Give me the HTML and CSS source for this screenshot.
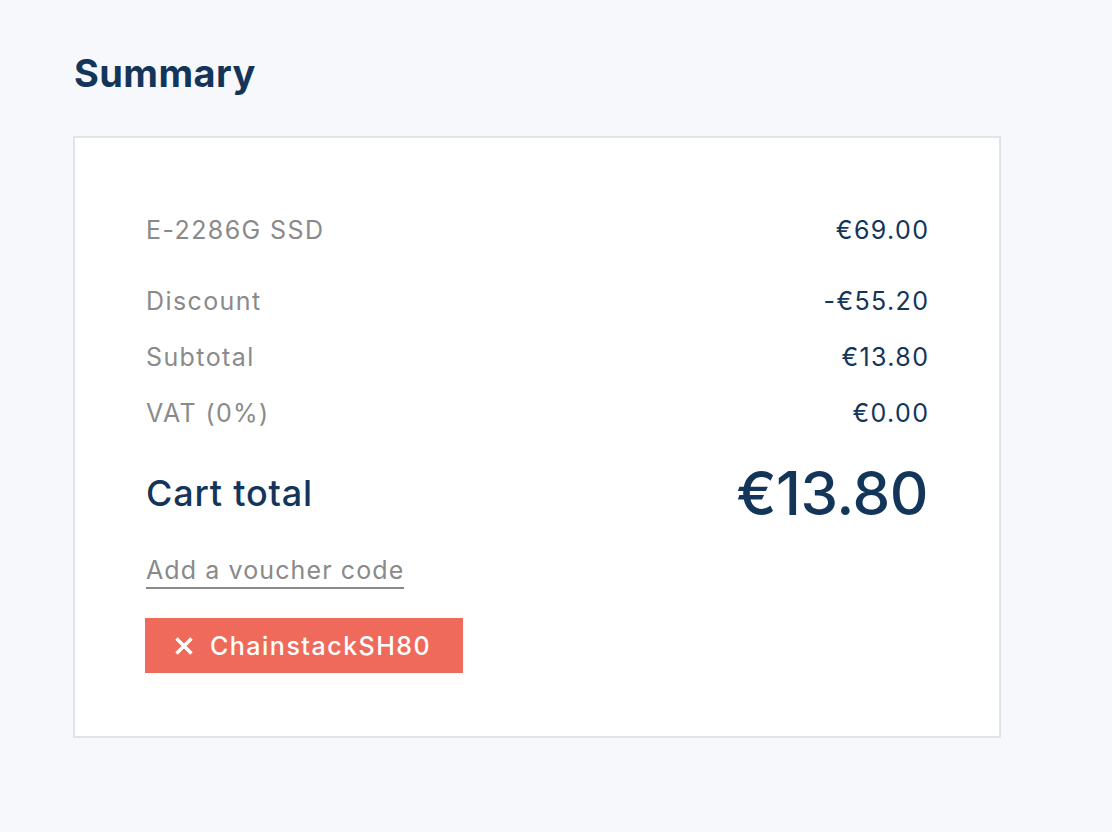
FILE: index.html
```html
<!DOCTYPE html>
<html lang="en">
<head>
<meta charset="utf-8">
<title>Summary</title>
<link rel="stylesheet" href="styles.css">
</head>
<body>
<main class="page">
  <h1 class="title">Summary</h1>
  <section class="card">
    <div class="row row-first">
      <span class="label">E-2286G SSD</span>
      <span class="value">€69.00</span>
    </div>
    <div class="row row-gap">
      <span class="label">Discount</span>
      <span class="value">-€55.20</span>
    </div>
    <div class="row">
      <span class="label">Subtotal</span>
      <span class="value">€13.80</span>
    </div>
    <div class="row">
      <span class="label">VAT (0%)</span>
      <span class="value">€0.00</span>
    </div>
    <div class="total">
      <span class="total-label">Cart total</span>
      <span class="total-value">€13.80</span>
    </div>
    <div class="voucher"><a class="voucher-link" href="#">Add a voucher code</a></div>
    <div class="badge-wrap">
      <span class="badge">
        <svg class="badge-x" width="18" height="18" viewBox="0 0 18 18" aria-hidden="true"><path d="M1.5 1.5L16.5 16.5M16.5 1.5L1.5 16.5" stroke="#fff" stroke-width="3.4" stroke-linecap="butt"/></svg>
        <span class="badge-text">ChainstackSH80</span>
      </span>
    </div>
  </section>
</main>
</body>
</html>
```

FILE: styles.css
```css
html, body {
  margin: 0;
  padding: 0;
  background: #f7f8fc;
  font-family: Inter, "Noto Sans", sans-serif;
}
.page {
  padding: 45px 0 0 73px;
  width: 928px;
}
.title {
  margin: 0 0 35px 1px;
  font-size: 38px;
  line-height: 56px;
  font-weight: 700;
  color: #14355a;
  letter-spacing: 0.4px;
}
.card {
  background: #fff;
  border: 2px solid #dfe3ea;
  padding: 74px 71px 63px 71px;
  display: flex;
  flex-direction: column;
}
.row {
  display: flex;
  justify-content: space-between;
  align-items: center;
  font-size: 25px;
  line-height: 36px;
  margin-top: 20px;
  letter-spacing: 1.4px;
}
.row-first { margin-top: 0; }
.row-gap { margin-top: 35px; }
.label { color: #8a8a8a; }
.value { color: #14355a; margin-right: -1.4px; }
.total {
  display: flex;
  justify-content: space-between;
  align-items: center;
  margin-top: 26px;
  height: 72px;
}
.total-label {
  font-size: 36px;
  font-weight: 500;
  color: #14355a;
  letter-spacing: 0.8px;
}
.total-value {
  font-size: 60px;
  font-weight: 500;
  color: #14355a;
  letter-spacing: -0.5px;
}
.voucher {
  margin-top: 24px;
}
.voucher-link {
  display: inline-block;
  font-size: 25px;
  line-height: 34px;
  color: #8a8a8a;
  text-decoration: none;
  letter-spacing: 1.1px;
  border-bottom: 2px solid #8a8a8a;
}
.badge-wrap {
  margin-top: 29px;
  display: flex;
}
.badge {
  display: inline-flex;
  align-items: center;
  gap: 17px;
  height: 55px;
  padding: 0 33px 0 30px;
  background: #ef6a5a;
  color: #fff;
  font-size: 25px;
  font-weight: 500;
  margin-left: -1px;
}
.badge-text { letter-spacing: 1.5px; margin-right: -1.5px; }
.badge-x { flex: none; }
```
